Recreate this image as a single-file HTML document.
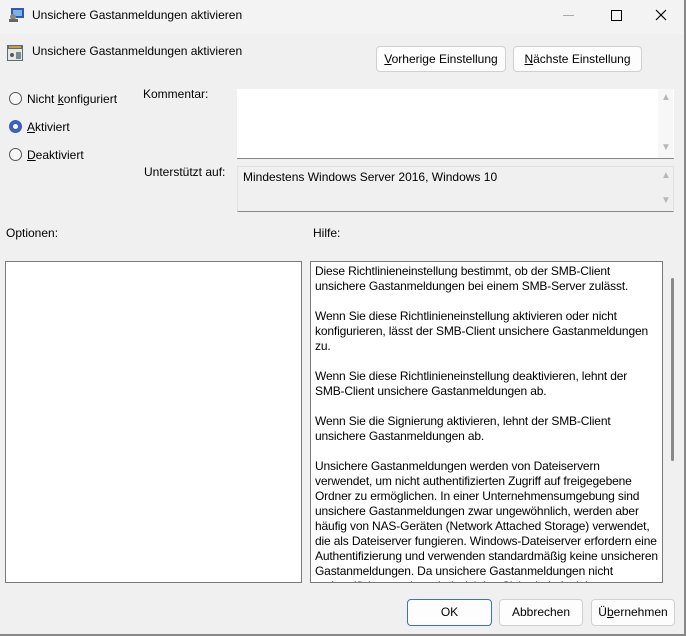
<!DOCTYPE html>
<html><head><meta charset="utf-8"><style>
*{box-sizing:border-box}
body{margin:0;width:686px;height:636px;background:#f0f0f0;font-family:"Liberation Sans",sans-serif;font-size:12px;color:#000;position:relative;overflow:hidden}
.a{position:absolute;white-space:nowrap}
.btn{position:absolute;background:#fdfdfd;border:1px solid #d0d0d0;border-radius:4px;text-align:center;line-height:24px;font-size:12px}
.rad{position:absolute;width:13px;height:13px;border-radius:50%;border:1px solid #555;background:#f7f7f7}
.box{position:absolute;border:1px solid #7a7a7a;background:#fff}
.tri{position:absolute;color:#b8b8b8;font-size:10px}
</style></head><body>
<div class="a" style="left:0;top:0;width:686px;height:34px;background:#f3f3f3"></div>
<svg class="a" style="left:8px;top:7px" width="17" height="16"><rect x="3" y="1" width="13" height="10" fill="#2a5db0"/><rect x="5" y="3" width="9" height="6" fill="#7fb0e8"/><circle cx="5" cy="10" r="3" fill="#888"/><rect x="1" y="12" width="9" height="3" fill="#666"/></svg>
<div class="a" style="left:32px;top:8px;font-size:12px">Unsichere Gastanmeldungen aktivieren</div>
<div class="a" style="left:563px;top:15px;width:11px;height:1px;background:#aaa"></div>
<div class="a" style="left:611px;top:10px;width:11px;height:11px;border:1px solid #000"></div>
<svg class="a" style="left:655px;top:9px" width="12" height="12"><path d="M1 1L11 11M11 1L1 11" stroke="#000" stroke-width="1.2"/></svg>
<svg class="a" style="left:7px;top:45px" width="16" height="16"><rect x="0" y="0" width="16" height="16" fill="#5a6b7a"/><rect x="1" y="4" width="14" height="11" fill="#e8e8e0"/><rect x="2" y="1" width="12" height="2" fill="#c8a040"/><circle cx="5" cy="10" r="2" fill="#557"/><rect x="9" y="7" width="5" height="7" fill="#789"/></svg>
<div class="a" style="left:32px;top:44px">Unsichere Gastanmeldungen aktivieren</div>
<div class="btn" style="left:376px;top:46px;width:130px;height:26px"><u>V</u>orherige Einstellung</div>
<div class="btn" style="left:513px;top:46px;width:129px;height:26px"><u>N</u>ächste Einstellung</div>
<div class="rad" style="left:9px;top:92px"></div>
<div class="a" style="left:27px;top:92px">Nicht <u>k</u>onfiguriert</div>
<div class="rad" style="left:9px;top:120px;background:#3c5fc0;border-color:#3c5fc0"><div style="position:absolute;left:3px;top:3px;width:5px;height:5px;border-radius:50%;background:#fff"></div></div>
<div class="a" style="left:27px;top:120px"><u>A</u>ktiviert</div>
<div class="rad" style="left:9px;top:148px"></div>
<div class="a" style="left:27px;top:148px"><u>D</u>eaktiviert</div>
<div class="a" style="left:143px;top:87px">Kommentar:</div>
<div class="a" style="left:237px;top:89px;width:437px;height:70px;background:#fff;border-bottom:1px solid #888"></div>
<div class="a" style="left:658px;top:89px;width:15px;height:69px;background:#f7f7f7"></div>
<div class="tri" style="left:661px;top:92px">▲</div><div class="tri" style="left:661px;top:142px">▼</div>
<div class="a" style="left:144px;top:165px">Unterstützt auf:</div>
<div class="a" style="left:237px;top:166px;width:437px;height:46px;background:#f0f0f0;border:1px solid #e0e0e0;border-bottom:1px solid #888"></div>
<div class="a" style="left:243px;top:170px">Mindestens Windows Server 2016, Windows 10</div>
<div class="tri" style="left:661px;top:170px">▲</div><div class="tri" style="left:661px;top:195px">▼</div>
<div class="a" style="left:6px;top:226px">Optionen:</div>
<div class="a" style="left:313px;top:226px">Hilfe:</div>
<div class="box" style="left:5px;top:261px;width:297px;height:322px"></div>
<div class="box" style="left:310px;top:261px;width:353px;height:322px;overflow:hidden">
<div style="padding:2px 4px;line-height:15px;white-space:normal;font-size:12px;letter-spacing:-0.15px">
Diese Richtlinieneinstellung bestimmt, ob der SMB-Client unsichere Gastanmeldungen bei einem SMB-Server zulässt.<br><br>
Wenn Sie diese Richtlinieneinstellung aktivieren oder nicht konfigurieren, lässt der SMB-Client unsichere Gastanmeldungen zu.<br><br>
Wenn Sie diese Richtlinieneinstellung deaktivieren, lehnt der SMB-Client unsichere Gastanmeldungen ab.<br><br>
Wenn Sie die Signierung aktivieren, lehnt der SMB-Client unsichere Gastanmeldungen ab.<br><br>
Unsichere Gastanmeldungen werden von Dateiservern verwendet, um nicht authentifizierten Zugriff auf freigegebene Ordner zu ermöglichen. In einer Unternehmensumgebung sind unsichere Gastanmeldungen zwar ungewöhnlich, werden aber häufig von NAS-Geräten (Network Attached Storage) verwendet, die als Dateiserver fungieren. Windows-Dateiserver erfordern eine Authentifizierung und verwenden standardmäßig keine unsicheren Gastanmeldungen. Da unsichere Gastanmeldungen nicht authentifiziert werden, sind wichtige Sicherheitsfunktionen
</div></div>
<div class="a" style="left:671px;top:278px;width:3px;height:183px;background:#888;border-radius:2px"></div>
<div class="btn" style="left:407px;top:599px;width:85px;height:27px;border:1px solid #3a6fd0">OK</div>
<div class="btn" style="left:499px;top:599px;width:84px;height:27px">Abbrechen</div>
<div class="btn" style="left:591px;top:599px;width:84px;height:27px">Ü<u>b</u>ernehmen</div>
<div class="a" style="left:684px;top:0;width:2px;height:636px;background:#888"></div>
<div class="a" style="left:0;top:634px;width:686px;height:2px;background:#888"></div>
</body></html>
